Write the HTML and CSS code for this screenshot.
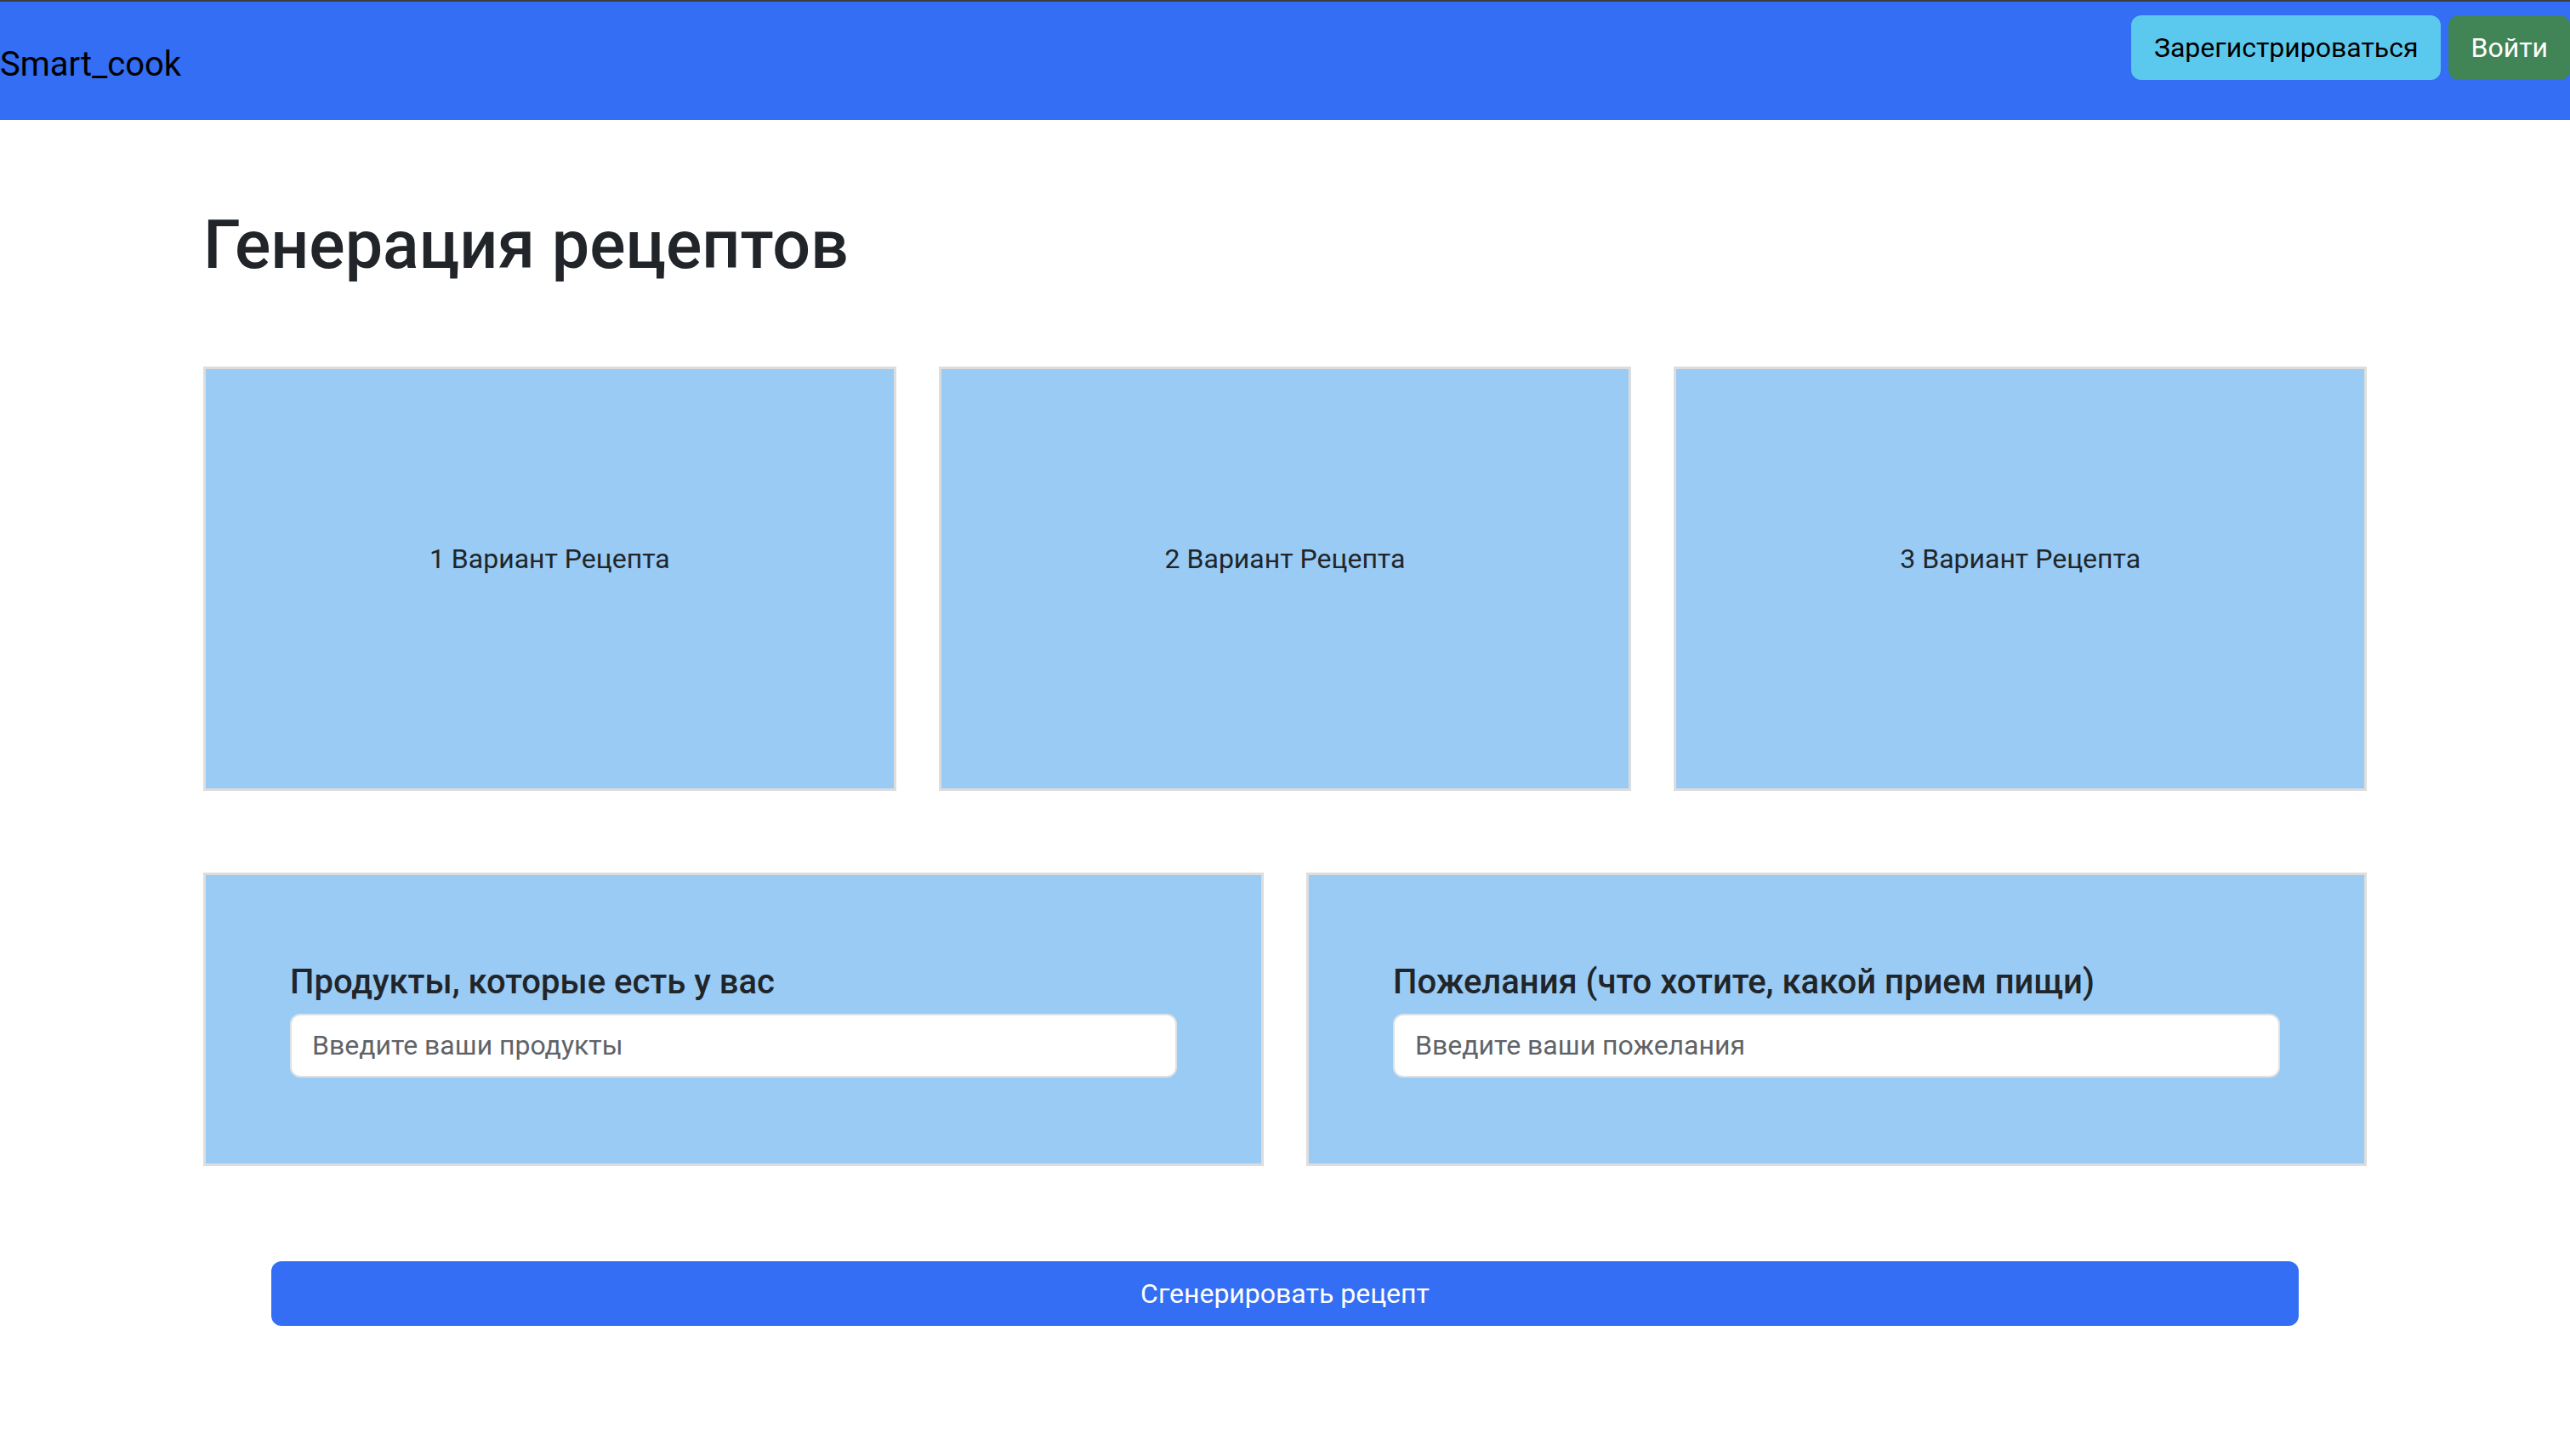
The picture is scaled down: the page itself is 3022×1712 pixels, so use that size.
FILE: index.html
```html
<!DOCTYPE html>
<html lang="ru">

<head>
    <meta charset="UTF-8">
    <meta name="viewport" content="width=device-width, initial-scale=1.0">
    <title>Smart_cook</title>
    <link rel="stylesheet" href="styles.css">
</head>

<body>
    <nav class="navbar">
        <a class="brand" href="#">Smart_cook</a>
        <div class="nav-buttons">
            <button class="btn btn-info">Зарегистрироваться</button>
            <button class="btn btn-success">Войти</button>
        </div>
    </nav>

    <main class="container">
        <h1>Генерация рецептов</h1>

        <div class="recipes">
            <div class="recipe-card">1 Вариант Рецепта</div>
            <div class="recipe-card">2 Вариант Рецепта</div>
            <div class="recipe-card">3 Вариант Рецепта</div>
        </div>

        <div class="inputs">
            <div class="input-box">
                <label for="products">Продукты, которые есть у вас</label>
                <input type="text" id="products" placeholder="Введите ваши продукты">
            </div>
            <div class="input-box">
                <label for="wishes">Пожелания (что хотите, какой прием пищи)</label>
                <input type="text" id="wishes" placeholder="Введите ваши пожелания">
            </div>
        </div>

        <div class="generate">
            <button class="btn btn-primary">Сгенерировать рецепт</button>
        </div>
    </main>
</body>

</html>
```

FILE: styles.css
```css
body {
    margin: 0;
    font-family: Roboto, "Noto Sans", sans-serif;
    color: #212529;
    background-color: #ffffff;
}

.navbar {
    display: flex;
    justify-content: space-between;
    align-items: center;
    height: 139px;
    border-top: 2px solid #3d3d3d;
    background-color: #336ef4;
}

.brand {
    font-size: 40px;
    color: #000000;
    text-decoration: none;
    margin-top: 8px;
}

.nav-buttons {
    display: flex;
    gap: 9px;
    align-self: flex-start;
    padding-top: 16px;
}

.btn {
    font-family: inherit;
    font-size: 32px;
    height: 76px;
    padding: 0 26px;
    border: none;
    border-radius: 12px;
    cursor: pointer;
}

.btn-info {
    background-color: #5bc9ee;
    color: #000000;
    padding: 0 27px;
}

.btn-success {
    background-color: #418557;
    color: #ffffff;
}

.btn-primary {
    background-color: #336ef4;
    color: #ffffff;
    width: 100%;
}

.container {
    width: 2544px;
    margin: 0 auto;
}

h1 {
    font-size: 79px;
    font-weight: 500;
    margin: 0;
    padding: 100px 0 95px;
    line-height: 1.2;
}

.recipes {
    display: flex;
    gap: 50px;
}

.recipe-card {
    flex: 1;
    height: 499px;
    display: flex;
    justify-content: center;
    align-items: center;
    padding-bottom: 46px;
    box-sizing: border-box;
    background-color: #99cbf5;
    border: 3px solid #dddddd;
    font-size: 32px;
}

.inputs {
    display: flex;
    gap: 50px;
    margin-top: 96px;
}

.input-box {
    flex: 1;
    display: flex;
    flex-direction: column;
    padding: 102px 99px 101px;
    background-color: #99cbf5;
    border: 3px solid #dddddd;
}

.input-box label {
    font-size: 40px;
    font-weight: 500;
    line-height: 1.2;
    margin-bottom: 13px;
}

.input-box input {
    font-family: inherit;
    font-size: 32px;
    height: 75px;
    padding: 0 24px;
    border: 2px solid #dee2e6;
    border-radius: 12px;
    box-sizing: border-box;
    color: #212529;
}

.input-box input::placeholder {
    color: #5f6368;
}

.generate {
    padding: 112px 80px 0;
}
```
